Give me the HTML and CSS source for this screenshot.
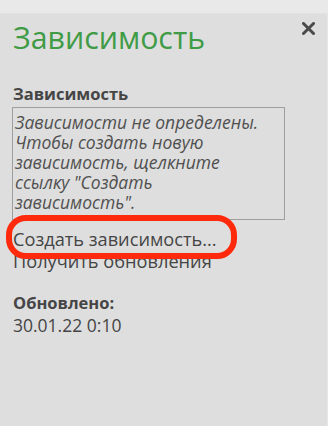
FILE: index.html
```html
<!DOCTYPE html>
<html lang="ru">
<head>
    <meta charset="UTF-8">
    <meta name="viewport" content="width=device-width, initial-scale=1.0">
    <title>Зависимость</title>
    <link rel="stylesheet" href="styles.css">
</head>
<body>
    <div class="topbar"></div>
    <div class="pane">
        <div class="pane-header">
            <h1>Зависимость</h1>
            <svg class="close" width="13" height="13" viewBox="0 0 13 13">
                <path d="M1.5 1.5 L11.5 11.5 M11.5 1.5 L1.5 11.5" stroke="#4a4a4a" stroke-width="3" stroke-linecap="round"/>
            </svg>
        </div>

        <div class="section">
            <div class="label">Зависимость</div>
            <div class="info-box">Зависимости не определены. Чтобы создать новую зависимость, щелкните ссылку "Создать зависимость".</div>
        </div>

        <!-- links, first one is circled -->
        <div class="links">
            <a href="#" class="link highlighted">Создать зависимость...</a>
            <a href="#" class="link">Получить обновления</a>
        </div>

        <div class="updated">
            <div class="label">Обновлено:</div>
            <div class="value">30.01.22 0:10</div>
        </div>
    </div>
</body>
</html>
```

FILE: styles.css
```css
body {
    margin: 0;
    padding: 0;
    background-color: #dedede;
    font-family: "Open Sans", "Noto Sans", sans-serif;
    color: #464646;
    width: 328px;
    height: 426px;
    overflow: hidden;
}

.topbar {
    height: 13px;
    background-color: #e9e9e9;
    border-bottom: 1px solid #e2e2e2;
}

.pane {
    padding: 0 12px;
    border-right: 1px solid #e6e6e6;
    height: 412px;
}

.pane-header {
    display: flex;
    justify-content: space-between;
    align-items: flex-start;
}

h1 {
    margin: 3px 0 0 1px;
    font-size: 30.3px;
    line-height: 42px;
    font-weight: 400;
    color: #3f9b45;
}

.close {
    margin: 8px 0 0 0;
}

.section {
    margin-top: 24px;
}

.label {
    font-size: 16.5px;
    line-height: 22px;
    font-weight: 700;
    color: #454545;
    padding-left: 1px;
}

.info-box {
    box-sizing: border-box;
    width: 273px;
    height: 113px;
    margin-top: 2px;
    padding: 4px 8px 0 2px;
    border: 1px solid #9e9e9e;
    font-size: 17.5px;
    font-style: italic;
    line-height: 20px;
    color: #505050;
    overflow: hidden;
}

.links {
    display: flex;
    flex-direction: column;
    align-items: flex-start;
    margin-top: 8px;
    padding-left: 1px;
}

.link {
    font-size: 18.2px;
    line-height: 22px;
    color: #454545;
    text-decoration: none;
}

.highlighted {
    position: relative;
    z-index: 1;
}

.highlighted:after {
    content: "";
    position: absolute;
    left: -7px;
    right: -20px;
    top: -13px;
    bottom: -9px;
    border: 6px solid #ff2a0c;
    border-radius: 20px;
}

.updated {
    margin-top: 21px;
}

.updated .label {
    line-height: 20px;
}

.updated .value {
    font-size: 17.5px;
    line-height: 24px;
    color: #454545;
    padding-left: 1px;
}
```
